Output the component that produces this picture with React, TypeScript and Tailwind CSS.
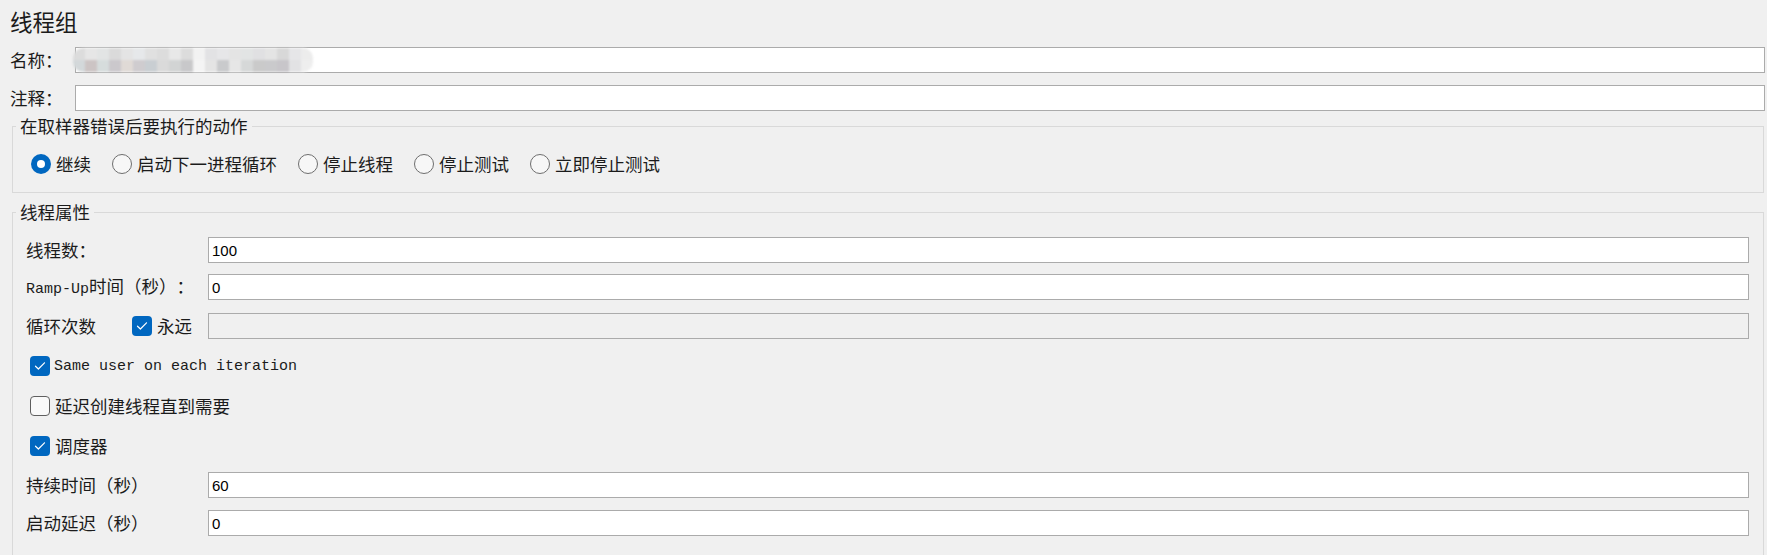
import React from "react";

const cjk = "font-['Noto_Sans_CJK_SC','Noto_Sans_CJK_JP',sans-serif]";
const mono = "font-['Liberation_Mono','Noto_Sans_CJK_SC',monospace] text-[15px]";

// blurred value in the 名称 field
const blurTop = [
  "#dcdcdc", "#e6e6e6", "#e2e4e4", "#dadada", "#e4e4e4", "#e6e8ea", "#e0e0e0", "#dcdcdc", "#e8e8e8", "#dcdcdc",
  "#f2f2f2", "#e2e2e4", "#e6e6e8", "#e4e4e4", "#e2e4e4", "#e0e0e2", "#e4e4e4", "#d8d8d8", "#e6e6e8", "#ececec",
];
const blurBottom = [
  "#d3d8da", "#ccc4c4", "#d6dcdc", "#cbc8cc", "#e0dad6", "#cfcccf", "#c9ced2", "#dadada", "#d2d4d4", "#c8c8ca",
  "#f4f4f4", "#e4e4e4", "#c9cacc", "#e6e6e6", "#d6d8d8", "#cacaca", "#cacacc", "#c8c6ca", "#e2e2e4", "#eeeeee",
];

function TextBox({ value, disabled, className = "" }: { value?: string; disabled?: boolean; className?: string }) {
  return (
    <input
      readOnly
      defaultValue={value}
      disabled={disabled}
      className={`h-[26px] min-w-0 flex-1 border border-[#ababab] px-[3px] font-['Liberation_Sans',sans-serif] text-[15px] text-black outline-none ${
        disabled ? "bg-[#f0f0f0]" : "bg-white"
      } ${className}`}
    />
  );
}

function Radio({ checked, label }: { checked?: boolean; label: string }) {
  return (
    <div className="flex items-center gap-[5px]">
      {checked ? (
        <span className="flex h-5 w-5 items-center justify-center rounded-full bg-[#0067c0]">
          <span className="h-2 w-2 rounded-full bg-white" />
        </span>
      ) : (
        <span className="h-5 w-5 rounded-full border border-[#6e6e6e] bg-[#f7f7f7]" />
      )}
      <span className="leading-none">{label}</span>
    </div>
  );
}

function Check({ checked }: { checked?: boolean }) {
  if (!checked) return <span className="h-5 w-5 shrink-0 rounded-[4px] border border-[#5f5f5f] bg-[#f9f9f9]" />;
  return (
    <span className="flex h-5 w-5 shrink-0 items-center justify-center rounded-[4px] bg-[#0067c0]">
      <svg width="12" height="10" viewBox="0 0 12 10" fill="none">
        <path d="M1.5 5.2 L4.4 8 L10.5 1.8" stroke="white" strokeWidth="1.2" strokeLinecap="round" strokeLinejoin="round" />
      </svg>
    </span>
  );
}

function Group({ title, className = "", children }: { title: string; className?: string; children: React.ReactNode }) {
  return (
    <fieldset className={`ml-[12px] mr-[3px] border border-[#d9d9d9] p-0`}>
      <legend className="ml-[3px] px-[4px] text-[17.5px] leading-[20px] text-[#1b1b1b]">{title}</legend>
      <div className={className}>{children}</div>
    </fieldset>
  );
}

export default function App() {
  return (
    <div
      className={`h-[555px] w-full overflow-hidden bg-[#f0f0f0] text-[17.5px] text-[#1b1b1b] [text-spacing-trim:space-all] ${cjk}`}
    >
      {/* header */}
      <div className="flex h-[42px] items-center pl-[10px] text-[22.5px] leading-none">线程组</div>

      <div className="mt-[5px] flex items-center pr-[2px]">
        <span className="w-[75px] shrink-0 pl-[10px] leading-none">名称：</span>
        <div className="relative flex h-[26px] flex-1 items-center border border-[#ababab] bg-white">
          <div className="-ml-[3px] flex flex-col overflow-hidden rounded-[10px] blur-[1.2px]">
            <div className="flex">
              {blurTop.map((c, i) => (
                <span key={i} className="h-[12px] w-[12px]" style={{ background: c }} />
              ))}
            </div>
            <div className="flex">
              {blurBottom.map((c, i) => (
                <span key={i} className="h-[12px] w-[12px]" style={{ background: c }} />
              ))}
            </div>
          </div>
        </div>
      </div>

      <div className="mt-[12px] flex items-center pr-[2px]">
        <span className="w-[75px] shrink-0 pl-[10px] leading-none">注释：</span>
        <TextBox />
      </div>

      {/* on sampler error */}
      <div className="mt-[5px]">
        <Group title="在取样器错误后要执行的动作" className="pb-[18px] pl-[18px] pt-[18px]">
          <div className="flex h-5 items-center gap-[21px]">
            <Radio checked label="继续" />
            <Radio label="启动下一进程循环" />
            <Radio label="停止线程" />
            <Radio label="停止测试" />
            <Radio label="立即停止测试" />
          </div>
        </Group>
      </div>

      {/* thread properties */}
      <div className="mt-[9px]">
        <Group title="线程属性" className="pb-[60px] pl-[13px] pr-[14px] pt-[15px]">
          <div className="flex items-center">
            <span className="w-[182px] shrink-0 leading-none">线程数：</span>
            <TextBox value="100" />
          </div>
          <div className="mt-[11px] flex items-center">
            <span className="w-[182px] shrink-0 leading-none">
              <span className={mono}>Ramp-Up</span>时间（秒）：
            </span>
            <TextBox value="0" />
          </div>
          <div className="mt-[13px] flex items-center">
            <span className="w-[106px] shrink-0 leading-none">循环次数</span>
            <Check checked />
            <span className="ml-[5px] w-[51px] shrink-0 leading-none">永远</span>
            <TextBox disabled />
          </div>
          <div className="ml-[4px] mt-[17px] flex h-5 items-center gap-[4px]">
            <Check checked />
            <span className={`${mono} leading-none`}>Same user on each iteration</span>
          </div>
          <div className="ml-[4px] mt-[20px] flex h-5 items-center gap-[5px]">
            <Check />
            <span className="leading-none">延迟创建线程直到需要</span>
          </div>
          <div className="ml-[4px] mt-[20px] flex h-5 items-center gap-[5px]">
            <Check checked />
            <span className="leading-none">调度器</span>
          </div>
          <div className="mt-[16px] flex items-center">
            <span className="w-[182px] shrink-0 leading-none">持续时间（秒）</span>
            <TextBox value="60" />
          </div>
          <div className="mt-[12px] flex items-center">
            <span className="w-[182px] shrink-0 leading-none">启动延迟（秒）</span>
            <TextBox value="0" />
          </div>
        </Group>
      </div>
    </div>
  );
}
